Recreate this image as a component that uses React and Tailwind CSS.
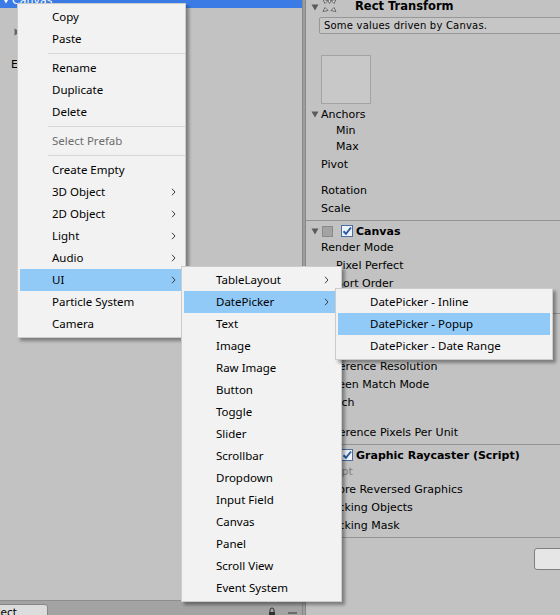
import React from 'react';

const menuMain = [
  { label: 'Copy' },
  { label: 'Paste' },
  { sep: true },
  { label: 'Rename' },
  { label: 'Duplicate' },
  { label: 'Delete' },
  { sep: true },
  { label: 'Select Prefab', disabled: true },
  { sep: true },
  { label: 'Create Empty' },
  { label: '3D Object', arrow: true },
  { label: '2D Object', arrow: true },
  { label: 'Light', arrow: true },
  { label: 'Audio', arrow: true },
  { label: 'UI', arrow: true, hl: true },
  { label: 'Particle System' },
  { label: 'Camera' },
];

const menuUI = [
  { label: 'TableLayout', arrow: true },
  { label: 'DatePicker', arrow: true, hl: true },
  { label: 'Text' },
  { label: 'Image' },
  { label: 'Raw Image' },
  { label: 'Button' },
  { label: 'Toggle' },
  { label: 'Slider' },
  { label: 'Scrollbar' },
  { label: 'Dropdown' },
  { label: 'Input Field' },
  { label: 'Canvas' },
  { label: 'Panel' },
  { label: 'Scroll View' },
  { label: 'Event System' },
];

const menuDate = [
  { label: 'DatePicker - Inline' },
  { label: 'DatePicker - Popup', hl: true },
  { label: 'DatePicker - Date Range' },
];

function Chevron() {
  return (
    <svg width="5" height="8" viewBox="0 0 5 8" className="shrink-0">
      <path d="M1 0.8L4 4L1 7.2" fill="none" stroke="#3c3c3c" strokeWidth="1" />
    </svg>
  );
}

function MenuItems({ items, arrowPad }) {
  return items.map((it, i) =>
    it.sep ? (
      <div key={i} className="h-[7px] flex items-center pl-[28px] -mr-[2px]">
        <div className="h-px w-full bg-[#d7d7d7]" />
      </div>
    ) : (
      <div
        key={i}
        className={`h-[22px] flex items-center pl-[32px] ${arrowPad} ${it.hl ? 'bg-[#91c9f7]' : ''}`}
      >
        <span className={`flex-1 whitespace-nowrap ${it.disabled ? 'text-[#6d6d6d]' : 'text-black'}`}>{it.label}</span>
        {it.arrow && <Chevron />}
      </div>
    )
  );
}

function FoldDown({ color = '#5a5a5a' }) {
  return (
    <svg width="8" height="8" viewBox="0 0 8 8" className="shrink-0">
      <path d="M0.5 1.5h7L4 7.5z" fill={color} />
    </svg>
  );
}

function CheckBox() {
  return (
    <svg width="12" height="12" viewBox="0 0 12 12" className="shrink-0">
      <rect x="0.5" y="0.5" width="11" height="11" fill="#eef3fb" stroke="#4d6f9e" />
      <path d="M2.5 6.2L5 8.8L10 2.5" fill="none" stroke="#2a5da8" strokeWidth="2" />
    </svg>
  );
}

function Row({ children, className = '' }) {
  return <div className={`h-[16px] flex items-center whitespace-nowrap ${className}`}>{children}</div>;
}

function ComponentBox() {
  return <div className="ml-[3px] w-[11px] h-[11px] shrink-0 bg-[#a3a3a3] border border-[#8a8a8a]" />;
}

export default function App() {
  return (
    <div className="relative w-[560px] h-[615px] overflow-hidden bg-[#c2c2c2] flex font-['DejaVu_Sans',sans-serif] text-[11px] leading-none text-black">
      {/* Hierarchy */}
      <div className="w-[302px] flex flex-col">
        <div className="flex-1 flex flex-col overflow-hidden">
          <div className="mt-[-8px] h-[16px] flex items-center bg-[#3a7be5] text-white">
            <div className="ml-[2px] w-[8px]"><FoldDown color="#ffffff" /></div>
            <span className="ml-[2px]">Canvas</span>
          </div>
          <div className="h-[16px] flex items-center pl-[28px]">Background</div>
          <div className="h-[16px] flex items-center pl-[14px]">
            <svg width="7" height="8" viewBox="0 0 7 8" className="shrink-0">
              <path d="M0.5 0.5L6.5 4L0.5 7.5z" fill="#646464" />
            </svg>
            <span className="ml-[7px]">DatePicker - Popup</span>
          </div>
          <div className="h-[16px] flex items-center pl-[40px]">Text</div>
          <div className="h-[16px] flex items-center pl-[11px]">EventSystem</div>
        </div>
        <div className="h-[15px] border-t border-[#8e8e8e] bg-[#a3a3a3] flex items-start">
          <div className="mt-[3px] ml-[-24px] w-[72px] h-[12px] bg-[#dcdcdc] border border-[#878787] rounded-tr-[3px] pl-[4px] pt-[2px] text-[10.5px]">
            Project
          </div>
          <div className="flex-1" />
          <svg width="8" height="10" viewBox="0 0 8 10" className="mt-[6px] mr-[12px]">
            <path d="M2 5V3a2 2 0 0 1 4 0v2" fill="none" stroke="#333" strokeWidth="1" />
            <rect x="1" y="5" width="6" height="5" fill="#333" />
          </svg>
          <svg width="9" height="6" viewBox="0 0 9 6" className="mt-[11px] mr-[5px]">
            <path d="M0 1h9" stroke="#333" strokeWidth="1" />
          </svg>
        </div>
      </div>

      {/* Splitter */}
      <div className="w-[4px] bg-[#9e9e9e] border-x border-[#878787]" />

      {/* Inspector */}
      <div className="flex-1 flex flex-col overflow-hidden">
        <div className="mt-[-1px] h-[16px] flex items-center">
          <div className="ml-[5px]"><FoldDown /></div>
          <svg width="17" height="15" viewBox="0 0 17 15" className="ml-[2px] mt-[-3px] shrink-0">
            <g fill="#d8d8d8" stroke="#6a6a6a" strokeWidth="1" strokeLinejoin="round">
              <path d="M2 1.5L7 2.5L4 5.5z" />
              <path d="M15 1.5L10 2.5L13 5.5z" />
              <path d="M2 13.5L7 12.5L4 9.5z" />
              <path d="M15 13.5L10 12.5L13 9.5z" />
              <path d="M8.5 0.5L10 3L8.5 5.5L7 3z" />
            </g>
          </svg>
          <span className="ml-[17px] font-bold text-[11.5px]">Rect Transform</span>
        </div>
        <div className="mt-[2px] ml-[13px] w-[260px] h-[17px] shrink-0 bg-[#c6c6c6] border border-[#979797] rounded-[2px] flex items-center pl-[4px] text-[10px] tracking-[0.2px]">
          Some values driven by Canvas.
        </div>
        <div className="mt-[21px] ml-[15px] w-[50px] h-[49px] shrink-0 bg-[#c8c8c8] border border-[#a3a3a3]" />
        <Row className="mt-[2px]">
          <div className="ml-[5px]"><FoldDown /></div>
          <span className="ml-[2px]">Anchors</span>
        </Row>
        <Row className="pl-[30px]">Min</Row>
        <Row className="pl-[30px]">Max</Row>
        <Row className="mt-[2px] pl-[15px]">Pivot</Row>
        <Row className="mt-[10px] pl-[15px]">Rotation</Row>
        <Row className="mt-[2px] pl-[15px]">Scale</Row>
        <div className="mt-[4px] h-px shrink-0 bg-[#939393]" />

        <Row className="mt-[2px]">
          <div className="ml-[5px]"><FoldDown /></div>
          <ComponentBox />
          <div className="ml-[8px]"><CheckBox /></div>
          <span className="ml-[3px] font-bold text-[11px]">Canvas</span>
        </Row>
        <Row className="pl-[15px]">Render Mode</Row>
        <Row className="mt-[2px] pl-[30px]">Pixel Perfect</Row>
        <Row className="mt-[2px] pl-[30px]">Sort Order</Row>
        <Row className="mt-[2px] pl-[15px]">Target Display</Row>
        <div className="mt-[4px] h-px shrink-0 bg-[#939393]" />
        <Row className="mt-[2px]">
          <div className="ml-[5px]"><FoldDown /></div>
          <ComponentBox />
          <span className="ml-[23px] font-bold text-[11px]">Canvas Scaler (Script)</span>
        </Row>
        <Row className="mt-[2px] pl-[15px]">UI Scale Mode</Row>
        <Row className="mt-[8px] pl-[15px]">Reference Resolution</Row>
        <Row className="mt-[2px] pl-[15px]">Screen Match Mode</Row>
        <Row className="mt-[2px] pl-[15px]">Match</Row>
        <Row className="mt-[14px] pl-[15px]">Reference Pixels Per Unit</Row>
        <div className="mt-[4px] h-px shrink-0 bg-[#939393]" />

        <Row className="mt-[2px]">
          <div className="ml-[5px]"><FoldDown /></div>
          <ComponentBox />
          <div className="ml-[8px]"><CheckBox /></div>
          <span className="ml-[3px] font-bold text-[11px]">Graphic Raycaster (Script)</span>
        </Row>
        <Row className="pl-[15px] text-[#808080]">Script</Row>
        <Row className="mt-[2px] pl-[15px]">Ignore Reversed Graphics</Row>
        <Row className="mt-[2px] pl-[15px]">Blocking Objects</Row>
        <Row className="mt-[2px] pl-[15px]">Blocking Mask</Row>
        <div className="mt-[4px] h-px shrink-0 bg-[#939393]" />
        <div className="mt-[10px] ml-[228px] w-[60px] h-[22px] shrink-0 rounded-[3px] border border-[#7f7f7f] bg-[#e6e6e6]" />
      </div>

      {/* Context menus */}
      <div className="absolute left-[17px] top-[3px] w-[169px] p-[2px] bg-[#f2f2f2] border border-[#cccccc] shadow-[3px_3px_3px_rgba(0,0,0,0.35)] font-['Noto_Sans',sans-serif] text-[11.5px] leading-none">
        <MenuItems items={menuMain} arrowPad="pr-[7px]" />
      </div>
      <div className="absolute left-[181px] top-[266px] w-[161px] p-[2px] bg-[#f2f2f2] border border-[#cccccc] shadow-[3px_3px_3px_rgba(0,0,0,0.35)] font-['Noto_Sans',sans-serif] text-[11.5px] leading-none">
        <MenuItems items={menuUI} arrowPad="pr-[10px]" />
      </div>
      <div className="absolute left-[335px] top-[288px] w-[218px] p-[2px] bg-[#f2f2f2] border border-[#cccccc] shadow-[3px_3px_3px_rgba(0,0,0,0.35)] font-['Noto_Sans',sans-serif] text-[11.5px] leading-none">
        <MenuItems items={menuDate} arrowPad="pr-[10px]" />
      </div>
    </div>
  );
}
